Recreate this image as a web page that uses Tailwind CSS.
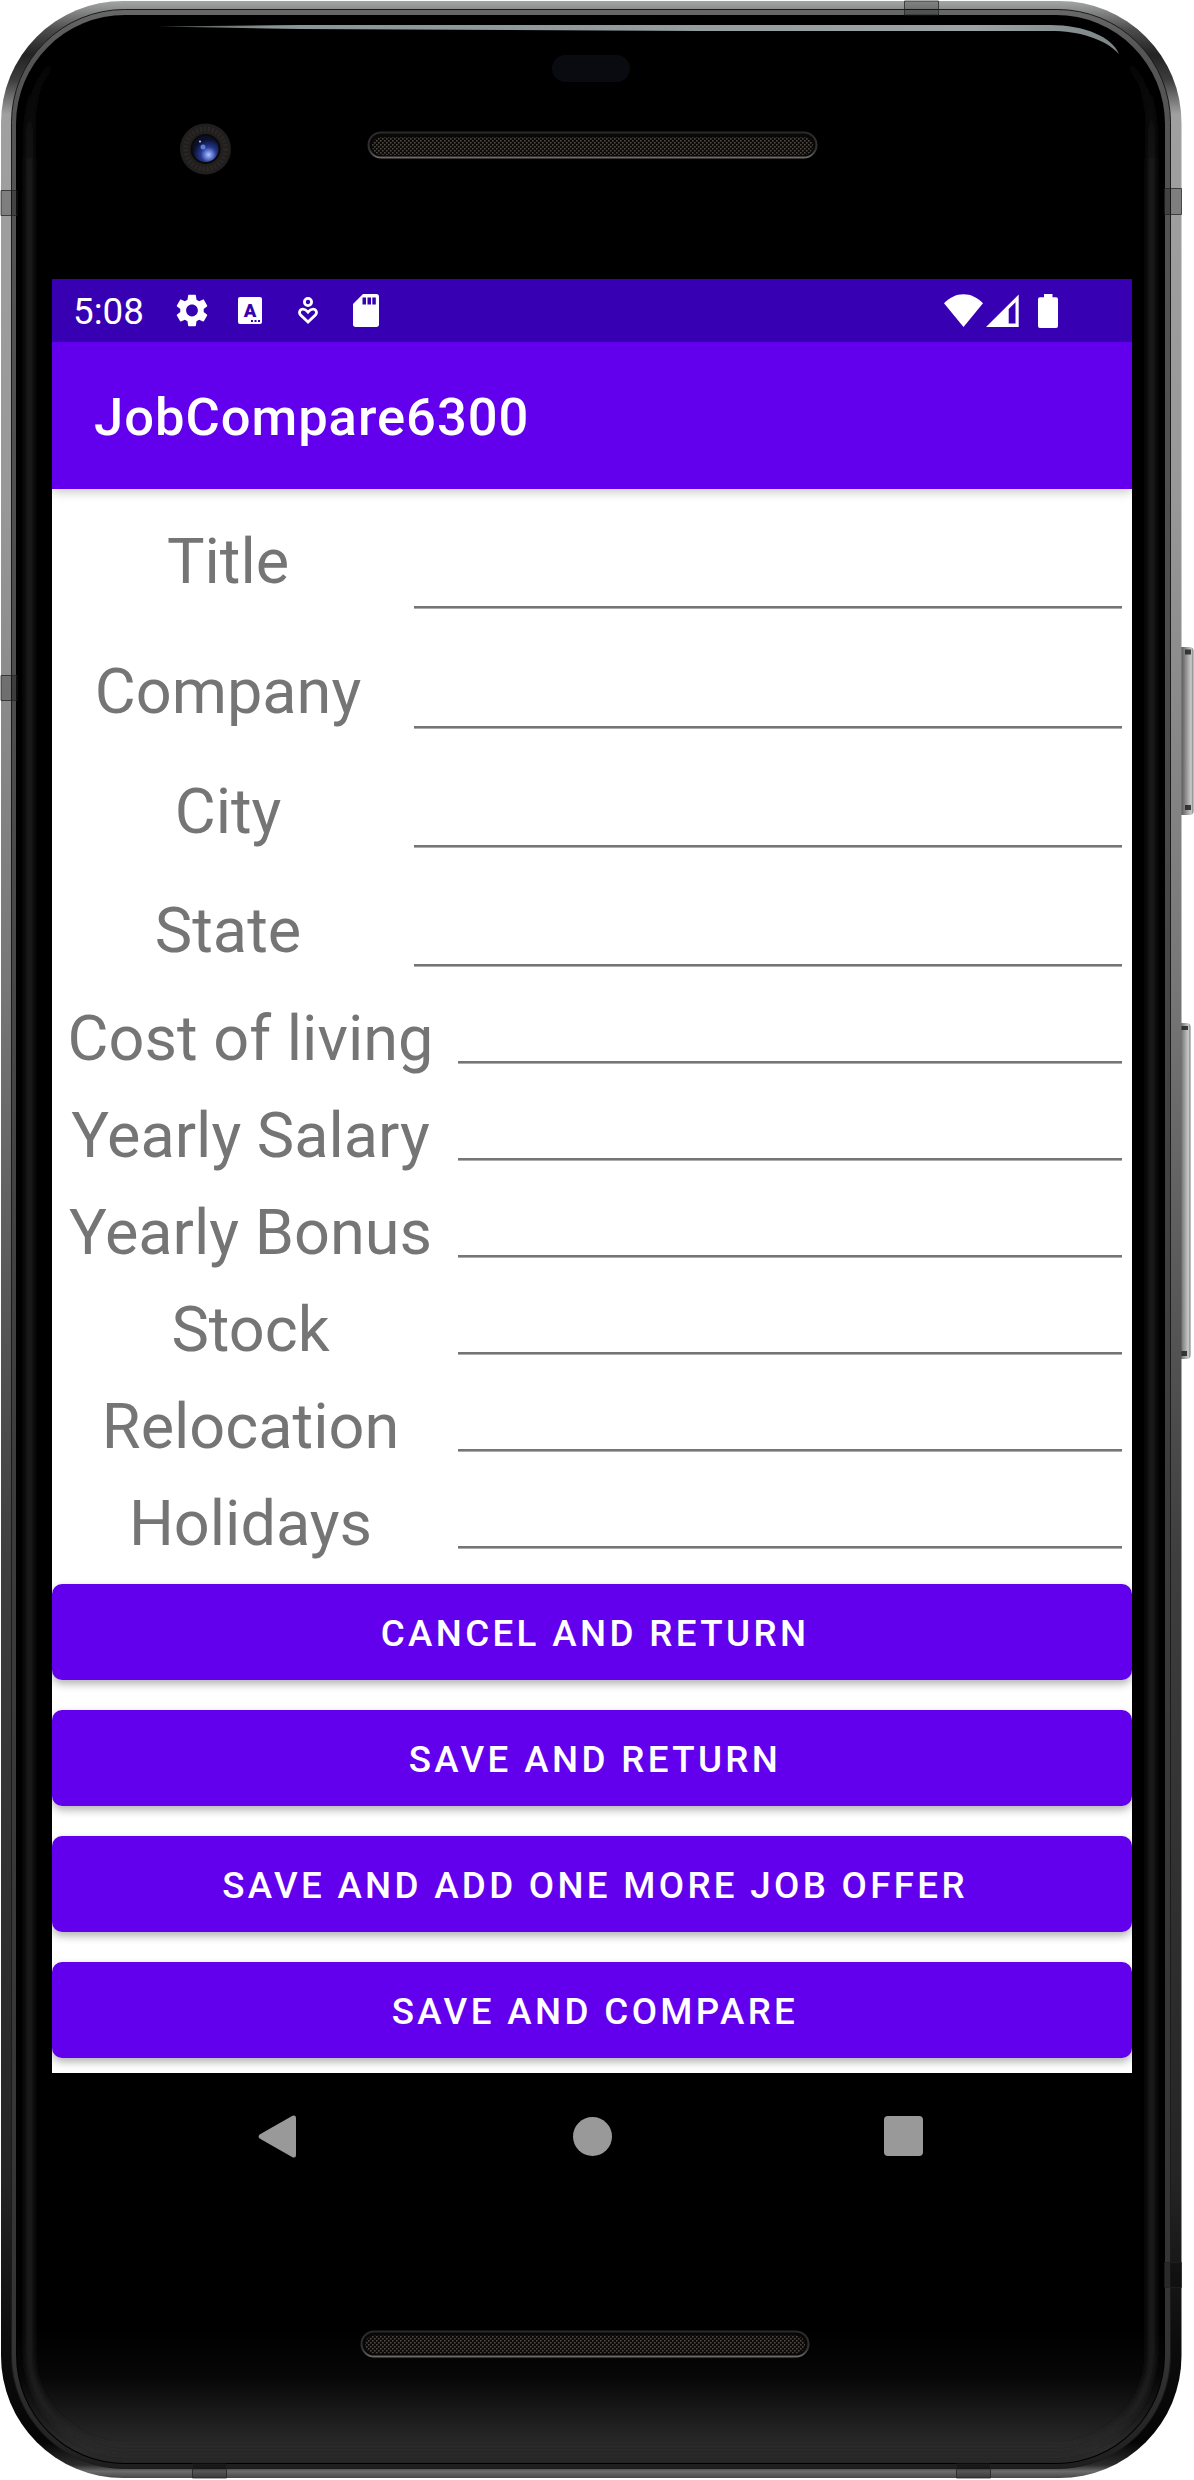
<!DOCTYPE html>
<html lang="en">
<head>
<meta charset="utf-8">
<title>JobCompare6300</title>
<script src="https://cdn.jsdelivr.net/npm/@tailwindcss/browser@4"></script>
</head>
<body class="bg-white">
<div class="relative w-[1194px] h-[2480px] overflow-hidden font-['Roboto',sans-serif]">

  <!-- Device body -->
  <svg class="absolute inset-0" width="1194" height="2480" viewBox="0 0 1194 2480" aria-hidden="true">
    <defs>
      <linearGradient id="metal" gradientUnits="userSpaceOnUse" x1="0" y1="0" x2="0" y2="2480">
        <stop offset="0" stop-color="#a4a9a6"/><stop offset=".004" stop-color="#8a8c8b"/>
        <stop offset=".012" stop-color="#4c4c4c"/><stop offset=".022" stop-color="#232323"/><stop offset=".032" stop-color="#3c3c3c"/>
        <stop offset=".046" stop-color="#a0a0a0"/><stop offset=".2" stop-color="#989898"/>
        <stop offset=".4" stop-color="#767676"/><stop offset=".63" stop-color="#3e3e3e"/>
        <stop offset=".88" stop-color="#242424"/><stop offset=".945" stop-color="#0c0c0c"/>
        <stop offset=".985" stop-color="#050505"/><stop offset=".994" stop-color="#2c2c2c"/>
        <stop offset=".9965" stop-color="#6c6c6c"/><stop offset="1" stop-color="#3c3c3c"/>
      </linearGradient>
      <linearGradient id="bezel" gradientUnits="userSpaceOnUse" x1="0" y1="0" x2="0" y2="2480">
        <stop offset="0" stop-color="#6c6c6c"/><stop offset=".02" stop-color="#555"/>
        <stop offset=".3" stop-color="#4c4c4c"/><stop offset=".6" stop-color="#3c3c3c"/>
        <stop offset=".95" stop-color="#343434"/><stop offset="1" stop-color="#1c1c1c"/>
      </linearGradient>
      <linearGradient id="glow" x1="0" y1="0" x2="0" y2="1">
        <stop offset="0" stop-color="#2e2e2e" stop-opacity="0"/><stop offset=".35" stop-color="#2e2e2e" stop-opacity=".15"/>
        <stop offset=".9" stop-color="#2e2e2e" stop-opacity=".95"/><stop offset="1" stop-color="#262626"/>
      </linearGradient>
      <linearGradient id="edge" gradientUnits="userSpaceOnUse" x1="0" y1="0" x2="0" y2="2480">
        <stop offset=".02" stop-color="#222" stop-opacity="0"/><stop offset=".07" stop-color="#222"/><stop offset=".97" stop-color="#222"/><stop offset="1" stop-color="#2c2c2c"/>
      </linearGradient>
      <filter id="soft" x="-5%" y="-5%" width="110%" height="110%"><feGaussianBlur stdDeviation="3"/></filter>
      <linearGradient id="shine" gradientUnits="userSpaceOnUse" x1="155" y1="0" x2="1120" y2="0">
        <stop offset="0" stop-color="#8b9595" stop-opacity=".5"/><stop offset=".12" stop-color="#8b9595"/><stop offset=".85" stop-color="#9ba3a3"/><stop offset="1" stop-color="#7b8585"/>
      </linearGradient>
      <linearGradient id="key" x1="0" y1="0" x2="1" y2="0">
        <stop offset="0" stop-color="#777"/><stop offset=".25" stop-color="#5f5f5f"/><stop offset=".5" stop-color="#8c8c8c"/><stop offset=".85" stop-color="#c8cccb"/><stop offset="1" stop-color="#777"/>
      </linearGradient>
      <linearGradient id="rim" x1="0" y1="0" x2="0" y2="1">
        <stop offset="0" stop-color="#2a2a2a"/><stop offset=".7" stop-color="#333"/><stop offset="1" stop-color="#6a6764"/>
      </linearGradient>
      <radialGradient id="lens" cx=".62" cy=".72" r=".6">
        <stop offset="0" stop-color="#b4c4ff"/><stop offset=".22" stop-color="#6f86dd"/><stop offset=".5" stop-color="#26388c"/><stop offset="1" stop-color="#0a0f2c"/>
      </radialGradient>
      <pattern id="mesh" width="4" height="4" patternUnits="userSpaceOnUse">
        <rect width="4" height="4" fill="#0b0a09"/><rect width="1.6" height="1.6" fill="#4d4841"/><rect x="2" y="2" width="1.6" height="1.6" fill="#4d4841"/>
      </pattern>
      <clipPath id="glass"><rect x="17" y="16" width="1147" height="2447" rx="108"/></clipPath>
    </defs>

    <!-- Side keys -->
    <rect x="1178" y="639" width="15" height="115" rx="4" fill="none"/>
    <rect x="1178" y="647" width="15.500" height="168" rx="4" fill="url(#key)"/>
    <path d="M1185 649.500h6v5h-6zM1185 805h6v5h-6z" fill="#222" fill-opacity=".85"/>
    <rect x="1176" y="1023" width="14.500" height="336" rx="4" fill="url(#key)"/>
    <path d="M1181 1026h7v4h-7zM1181 1351h6v5h-6z" fill="#222" fill-opacity=".85"/>

    <rect x="1" y="1" width="1180.500" height="2477" rx="122" fill="url(#metal)"/>
    <rect x="11.500" y="9.500" width="1159" height="2459" rx="113" fill="url(#bezel)" stroke="#1b1b1b"/>
    <rect x="16" y="15" width="1149" height="2449" rx="109" fill="#000"/>
    <g clip-path="url(#glass)">
      <rect x="17" y="2330" width="1147" height="133" fill="url(#glow)"/>
      <rect x="29.500" y="29" width="1122" height="2421" rx="97" fill="none" stroke="url(#edge)" stroke-width="7" filter="url(#soft)"/>
    </g>
    <path d="M158 26.500L300 25H1050C1085 25 1112 37 1119 54C1105 39 1080 31 1050 31H700L300 29Z" fill="url(#shine)"/>

    <!-- Antenna bands -->
    <g fill="#000" fill-opacity=".2" stroke="#222" stroke-opacity=".75">
      <path d="M1 190.500h16v25H1zM1 675.500h16v25H1z"/>
      <path d="M1164.500 188.500h17v26h-17zM1164.500 2262.500h17v25h-17z"/>
      <path d="M904.500 1v14h34V1zM192.500 2464v14h34v-14zM956.500 2464v14h34v-14z"/>
    </g>

    <!-- Camera and proximity sensor -->
    <circle cx="205.500" cy="149" r="25.500" fill="#211e1e"/>
    <circle cx="205.500" cy="149" r="20" fill="none" stroke="#2b2727" stroke-width="5" stroke-dasharray="2 2"/>
    <circle cx="205.500" cy="149" r="15" fill="#0a0909"/>
    <circle cx="205.500" cy="149" r="13" fill="url(#lens)"/>
    <circle cx="203" cy="147" r="2.500" fill="#5b7ce0"/><circle cx="200" cy="141.500" r="1" fill="#c8d4ff"/>
    <rect x="552" y="55" width="78" height="27" rx="13.500" fill="#0a0b10"/>

    <!-- Speakers -->
    <rect x="368.500" y="132.500" width="448" height="25" rx="12.500" fill="#080808" stroke="url(#rim)" stroke-width="2"/>
    <rect x="372" y="137" width="441" height="18" rx="9" fill="url(#mesh)"/>
    <rect x="361.500" y="2331.500" width="447" height="25" rx="12.500" fill="#080808" stroke="url(#rim)" stroke-width="2"/>
    <rect x="365" y="2335.500" width="440" height="18" rx="9" fill="url(#mesh)"/>
  </svg>

  <!-- Screen -->
  <main class="relative mt-[279px] ml-[52px] flex h-[1920px] w-[1080px] flex-col bg-white">
    <div class="flex h-[63px] shrink-0 items-center bg-[#3700b3] pl-[21px] text-white">
      <span class="w-[103px] pt-[2px] text-[36.75px] leading-[64px]">5:08</span>
      <svg width="32" height="33" viewBox="2.200 2 19.600 20" fill="#fff"><path d="M19.140 12.940c.04-.3.060-.61.060-.94 0-.32-.02-.64-.07-.94l2.030-1.580c.18-.14.230-.41.120-.61l-1.920-3.320c-.12-.22-.37-.29-.59-.22l-2.390.96c-.5-.38-1.030-.7-1.620-.94l-.36-2.540c-.04-.24-.24-.41-.48-.41h-3.840c-.24 0-.43.170-.47.410l-.36 2.540c-.59.240-1.130.570-1.620.940l-2.390-.96c-.22-.08-.47 0-.59.220L2.740 8.870c-.12.210-.08.470.120.610l2.030 1.580c-.05.300-.09.630-.09.940s.02.640.070.940l-2.030 1.580c-.18.140-.23.410-.12.610l1.920 3.320c.12.220.37.290.59.220l2.390-.96c.5.380 1.030.700 1.620.940l.36 2.540c.05.240.24.410.48.410h3.840c.24 0 .44-.17.470-.41l.36-2.540c.59-.24 1.130-.56 1.620-.94l2.390.96c.22.080.47 0 .59-.22l1.920-3.320c.12-.22.070-.47-.12-.61l-2.010-1.580zM12 15.600c-1.980 0-3.600-1.620-3.600-3.600s1.620-3.600 3.600-3.600 3.600 1.620 3.600 3.600-1.620 3.600-3.600 3.600z"/></svg>
      <svg class="ml-[30px]" width="24" height="27" viewBox="0 0 24 27"><rect width="24" height="27" rx="2" fill="#fff"/><text x="12" y="19.500" text-anchor="middle" font-family="Roboto" font-weight="900" font-size="18.500" fill="#3700b3">A</text><path d="M13 23h2v2h-2zM16.500 23h2v2h-2zM20 23h2v2h-2z" fill="#3700b3"/></svg>
      <svg class="ml-[36px]" width="20" height="27" viewBox="0 0 20 27" fill="none" stroke="#fff" stroke-width="2.800"><circle cx="10" cy="5" r="3.600"/><path d="M10 25L2.600 18C.4 15.600 1.800 12.100 5 12.100C7.300 12.100 8.500 13.300 10 15.100C11.500 13.300 12.700 12.100 15 12.100C18.200 12.100 19.600 15.600 17.400 18Z"/></svg>
      <svg class="ml-[35px]" width="26" height="33" viewBox="0 0 26 33"><path d="M10 0H23.300A2.700 2.700 0 0 1 26 2.700V30.300A2.700 2.700 0 0 1 23.300 33H2.700A2.700 2.700 0 0 1 0 30.300V10Z" fill="#fff"/><path d="M9.500 3.500h3.500v7H9.500zM14.500 3.500h3.500v7h-3.500zM19.300 3.500h3.500v7h-3.500z" fill="#3700b3"/></svg>
      <svg class="ml-auto" width="39" height="33" viewBox="0 0 39 33" fill="#fff"><path d="M0 9.300C5.500 3.500 12 .2 19.500.2S33.500 3.500 39 9.300L19.500 33Z"/></svg>
      <svg class="ml-[3px]" width="33" height="33" viewBox="0 0 33 33" fill="#fff"><path fill-rule="evenodd" d="M0 33L32.700 0.500V33ZM22.700 15V29.500H29.500V8.200Z"/></svg>
      <svg class="mr-[74px] ml-[19px]" width="20" height="34" viewBox="0 0 20 34" fill="#fff"><path d="M6 0h8.500v3.300H18a2 2 0 0 1 2 2V32a2 2 0 0 1-2 2H2a2 2 0 0 1-2-2V5.300a2 2 0 0 1 2-2H6z"/></svg>
    </div>

    <header class="relative z-10 flex h-[147px] shrink-0 items-center bg-[#6200ee] pl-[42px] shadow-[0_3px_10px_rgba(0,0,0,0.22)] [clip-path:inset(0_0_-20px_0)]">
      <h1 class="pt-[3px] text-[52.5px] leading-[64px] font-medium tracking-[0.98px] text-white">JobCompare6300</h1>
    </header>

    <section class="text-[63px] leading-[74px] text-[#757575]">
      <div class="flex h-[129px]"><label class="w-[352px] pt-[36px] text-center">Title</label><div class="mr-[10px] mb-[9px] ml-[10px] flex-1 self-end border-t-2 border-b border-t-[#757575] border-b-[#adadad]"></div></div>
      <div class="flex h-[120px]"><label class="w-[352px] pt-[37px] text-center">Company</label><div class="mr-[10px] mb-[9px] ml-[10px] flex-1 self-end border-t-2 border-b border-t-[#757575] border-b-[#adadad]"></div></div>
      <div class="flex h-[119px]"><label class="w-[352px] pt-[37px] text-center">City</label><div class="mr-[10px] mb-[9px] ml-[10px] flex-1 self-end border-t-2 border-b border-t-[#757575] border-b-[#adadad]"></div></div>
      <div class="flex h-[119px]"><label class="w-[352px] pt-[37px] text-center">State</label><div class="mr-[10px] mb-[9px] ml-[10px] flex-1 self-end border-t-2 border-b border-t-[#757575] border-b-[#adadad]"></div></div>
      <div class="flex h-[97px]"><label class="w-[396px] pt-[26px] pl-px text-center whitespace-nowrap">Cost of living</label><div class="mr-[10px] mb-[9px] ml-[10px] flex-1 self-end border-t-2 border-b border-t-[#757575] border-b-[#adadad]"></div></div>
      <div class="flex h-[97px]"><label class="w-[396px] pt-[26px] pl-px text-center whitespace-nowrap">Yearly Salary</label><div class="mr-[10px] mb-[9px] ml-[10px] flex-1 self-end border-t-2 border-b border-t-[#757575] border-b-[#adadad]"></div></div>
      <div class="flex h-[97px]"><label class="w-[396px] pt-[26px] pl-px text-center whitespace-nowrap">Yearly Bonus</label><div class="mr-[10px] mb-[9px] ml-[10px] flex-1 self-end border-t-2 border-b border-t-[#757575] border-b-[#adadad]"></div></div>
      <div class="flex h-[97px]"><label class="w-[396px] pt-[26px] pl-px text-center">Stock</label><div class="mr-[10px] mb-[9px] ml-[10px] flex-1 self-end border-t-2 border-b border-t-[#757575] border-b-[#adadad]"></div></div>
      <div class="flex h-[97px]"><label class="w-[396px] pt-[26px] pl-px text-center">Relocation</label><div class="mr-[10px] mb-[9px] ml-[10px] flex-1 self-end border-t-2 border-b border-t-[#757575] border-b-[#adadad]"></div></div>
      <div class="flex h-[97px]"><label class="w-[396px] pt-[26px] pl-px text-center">Holidays</label><div class="mr-[10px] mb-[9px] ml-[10px] flex-1 self-end border-t-2 border-b border-t-[#757575] border-b-[#adadad]"></div></div>
    </section>

    <section class="flex h-[515px] shrink-0 flex-col gap-[30px] overflow-hidden pt-[26px] text-[36.75px] font-medium text-white">
      <button class="h-[96px] shrink-0 rounded-[10px] bg-[#6200ee] pt-[3px] pl-[6px] tracking-[3.36px] shadow-[0_4px_8px_rgba(0,0,0,0.3)]">CANCEL AND RETURN</button>
      <button class="h-[96px] shrink-0 rounded-[10px] bg-[#6200ee] pt-[3px] pl-[6px] tracking-[3.36px] shadow-[0_4px_8px_rgba(0,0,0,0.3)]">SAVE AND RETURN</button>
      <button class="h-[96px] shrink-0 rounded-[10px] bg-[#6200ee] pt-[3px] pl-[6px] tracking-[3.3px] shadow-[0_4px_8px_rgba(0,0,0,0.3)]">SAVE AND ADD ONE MORE JOB OFFER</button>
      <button class="h-[96px] shrink-0 rounded-[10px] bg-[#6200ee] pt-[3px] pl-[6px] tracking-[3.36px] shadow-[0_4px_8px_rgba(0,0,0,0.3)]">SAVE AND COMPARE</button>
    </section>

    <nav class="flex h-[126px] shrink-0 items-center bg-black pr-[209px] pl-[206px]">
      <svg width="38" height="43" viewBox="0 0 38 43" fill="#999"><path d="M1.600 19.500L34.500 .8Q38 -.6 38 3V40Q38 43.600 34.500 42.200L1.600 23.500Q-.4 21.500 1.600 19.500Z"/></svg>
      <div class="ml-[277px] size-[39px] rounded-full bg-[#999]"></div>
      <div class="ml-auto h-[40px] w-[39px] rounded-[4px] bg-[#999]"></div>
    </nav>
  </main>
</div>
</body>
</html>
